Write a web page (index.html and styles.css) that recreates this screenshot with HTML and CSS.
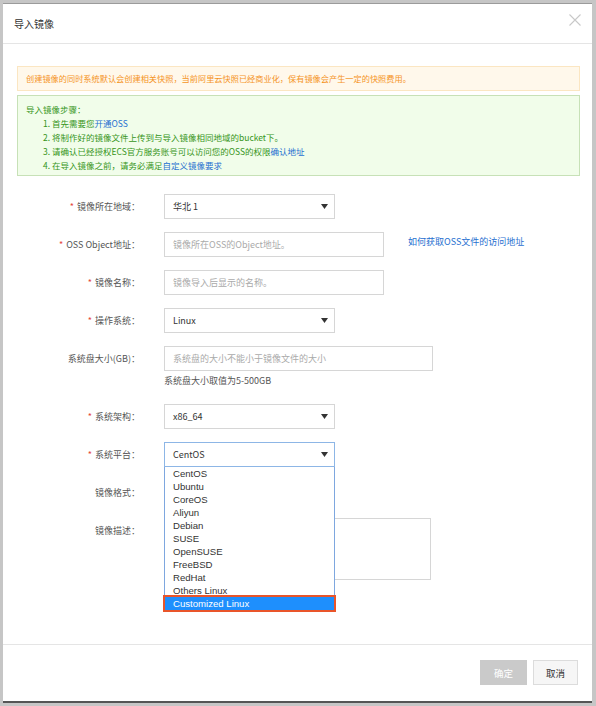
FILE: index.html
```html
<!DOCTYPE html>
<html lang="zh">
<head>
<meta charset="utf-8">
<title>导入镜像</title>
<link rel="stylesheet" href="styles.css">
</head>
<body>
<div class="dialog">
  <div class="header">
    <span class="title">导入镜像</span>
    <svg class="close" width="12" height="12" viewBox="0 0 12 12"><path d="M0.5 0.5 L11.5 11.5 M11.5 0.5 L0.5 11.5" stroke="#c8c8c8" stroke-width="1.1" fill="none"/></svg>
  </div>
  <div class="body">
    <div class="alert-warn">创建镜像的同时系统默认会创建相关快照，当前阿里云快照已经商业化，保有镜像会产生一定的快照费用。</div>
    <div class="alert-ok">
      <div>导入镜像步骤：</div>
      <ul class="steps">
        <li>1. 首先需要您<a class="link">开通OSS</a></li>
        <li>2. 将制作好的镜像文件上传到与导入镜像相同地域的bucket下。</li>
        <li>3. 请确认已经授权ECS官方服务账号可以访问您的OSS的权限<a class="link">确认地址</a></li>
        <li>4. 在导入镜像之前，请务必满足<a class="link">自定义镜像要求</a></li>
      </ul>
    </div>

    <div class="form">
      <div class="row">
        <div class="lbl"><span class="req">*</span>镜像所在地域：</div>
        <div class="select">华北 1<svg class="arrow" width="7" height="5" viewBox="0 0 7 5"><path d="M0 0 H7 L3.5 5 Z" fill="#333"/></svg></div>
      </div>
      <div class="row">
        <div class="lbl"><span class="req">*</span>OSS Object地址：</div>
        <div class="input w220 ph">镜像所在OSS的Object地址。</div>
        <a class="link side">如何获取OSS文件的访问地址</a>
      </div>
      <div class="row">
        <div class="lbl"><span class="req">*</span>镜像名称：</div>
        <div class="input w220 ph">镜像导入后显示的名称。</div>
      </div>
      <div class="row">
        <div class="lbl"><span class="req">*</span>操作系统：</div>
        <div class="select">Linux<svg class="arrow" width="7" height="5" viewBox="0 0 7 5"><path d="M0 0 H7 L3.5 5 Z" fill="#333"/></svg></div>
      </div>
      <div class="row">
        <div class="lbl">系统盘大小(GB)：</div>
        <div class="col">
          <div class="input w269 ph">系统盘的大小不能小于镜像文件的大小</div>
          <div class="help">系统盘大小取值为5-500GB</div>
        </div>
      </div>
      <div class="row">
        <div class="lbl"><span class="req">*</span>系统架构：</div>
        <div class="select">x86_64<svg class="arrow" width="7" height="5" viewBox="0 0 7 5"><path d="M0 0 H7 L3.5 5 Z" fill="#333"/></svg></div>
      </div>
      <div class="row">
        <div class="lbl"><span class="req">*</span>系统平台：</div>
        <div class="select-wrap">
          <div class="select focus">CentOS<svg class="arrow" width="7" height="5" viewBox="0 0 7 5"><path d="M0 0 H7 L3.5 5 Z" fill="#333"/></svg></div>
          <ul class="menu">
            <li>CentOS</li>
            <li>Ubuntu</li>
            <li>CoreOS</li>
            <li>Aliyun</li>
            <li>Debian</li>
            <li>SUSE</li>
            <li>OpenSUSE</li>
            <li>FreeBSD</li>
            <li>RedHat</li>
            <li>Others Linux</li>
            <li class="active">Customized Linux</li>
          </ul>
        </div>
      </div>
      <div class="row">
        <div class="lbl">镜像格式：</div>
        <div class="select"></div>
      </div>
      <div class="row">
        <div class="lbl">镜像描述：</div>
        <div class="textarea"></div>
      </div>
    </div>
  </div>
  <div class="footer">
    <button class="btn primary">确定</button>
    <button class="btn cancel">取消</button>
  </div>
</div>
</body>
</html>
```

FILE: styles.css
```css
html, body {
  margin: 0;
  padding: 0;
}
body {
  background: #c6c6c6;
  font-family: "Noto Sans CJK SC", "Noto Sans", sans-serif;
  width: 596px;
  height: 706px;
  overflow: hidden;
}
.dialog {
  margin: 3px 0 0 3px;
  width: 589px;
  height: 700px;
  box-sizing: border-box;
  background: #fff;
  border-top: 1px solid #9b9b9b;
  border-bottom: 2px solid #555;
  display: flex;
  flex-direction: column;
}
.header {
  height: 40px;
  box-sizing: border-box;
  border-bottom: 1px solid #e5e5e5;
  display: flex;
  justify-content: space-between;
  align-items: center;
  padding: 0 11px;
  flex-shrink: 0;
}
.title {
  font-size: 10px;
  color: #333;
}
.close {
  align-self: flex-start;
  margin-top: 10px;
}
.body {
  flex: 1;
  padding: 22px 12px 0 14px;
}
.alert-warn {
  height: 25px;
  box-sizing: border-box;
  border: 1px solid #fbe6c2;
  background: #fff8eb;
  color: #f5941f;
  font-size: 8.2px;
  line-height: 23px;
  padding-left: 8px;
  white-space: nowrap;
}
.alert-ok {
  margin-top: 4px;
  height: 81px;
  box-sizing: border-box;
  border: 1px solid #c7e1b7;
  background: #f1fdea;
  color: #36951a;
  font-size: 8.5px;
  line-height: 14px;
  padding: 6px 8px;
}
.steps {
  list-style: none;
  margin: 0;
  padding: 0 0 0 17px;
}
.link {
  color: #1f6fd0;
  text-decoration: none;
}
.form {
  margin-top: 18px;
}
.row {
  display: flex;
  align-items: flex-start;
  margin-bottom: 13px;
}
.lbl {
  width: 123px;
  flex-shrink: 0;
  margin-right: 24px;
  text-align: right;
  font-size: 9px;
  line-height: 25px;
  color: #555;
}
.req {
  color: #e5473b;
  margin-right: 3px;
}
.select, .input, .textarea {
  box-sizing: border-box;
  border: 1px solid #d6d6d6;
  background: #fff;
  font-size: 9px;
  color: #333;
}
.select, .input {
  height: 25px;
  line-height: 23px;
  padding-left: 8px;
}
.select {
  width: 171px;
  display: flex;
  justify-content: space-between;
  align-items: center;
  padding-right: 6px;
}
.select.focus {
  border-color: #8db6e6;
}
.select-wrap {
  position: relative;
}
.input.w220 { width: 220px; }
.input.w269 { width: 269px; }
.ph { color: #aaa; }
.side {
  margin-left: 24px;
  font-size: 9px;
  line-height: 19px;
}
.col {
  display: flex;
  flex-direction: column;
}
.help {
  font-size: 9px;
  line-height: 20px;
  color: #555;
}
.textarea {
  width: 267px;
  height: 62px;
}
.menu {
  position: absolute;
  left: 0;
  top: 25px;
  z-index: 5;
  width: 171px;
  box-sizing: border-box;
  margin: 0;
  padding: 0;
  list-style: none;
  background: #fff;
  border: 1px solid #7ea7df;
  border-top: none;
  font-family: "Liberation Sans", Arial, sans-serif;
  font-size: 9.6px;
  color: #333;
}
.menu li {
  height: 13px;
  line-height: 13px;
  padding-left: 8px;
}
.menu li.active {
  height: 17px;
  line-height: 13px;
  box-sizing: border-box;
  margin: -2px -2px -1px;
  padding-left: 8px;
  border: 2px solid #e9552a;
  background: #1e8ffd;
  color: #fff;
}
.footer {
  height: 57px;
  box-sizing: border-box;
  flex-shrink: 0;
  border-top: 1px solid #e5e5e5;
  padding: 15px 14px 0;
  display: flex;
  justify-content: flex-end;
  align-items: flex-start;
  gap: 6px;
}
.btn {
  height: 25px;
  box-sizing: border-box;
  font-family: "Noto Sans CJK SC", sans-serif;
  font-size: 9.5px;
  padding: 0;
  cursor: default;
}
.btn.primary {
  width: 47px;
  background: #cacaca;
  border: 1px solid #cacaca;
  color: #fff;
}
.btn.cancel {
  width: 45px;
  background: #f6f6f6;
  border: 1px solid #dcdcdc;
  color: #333;
}
```
